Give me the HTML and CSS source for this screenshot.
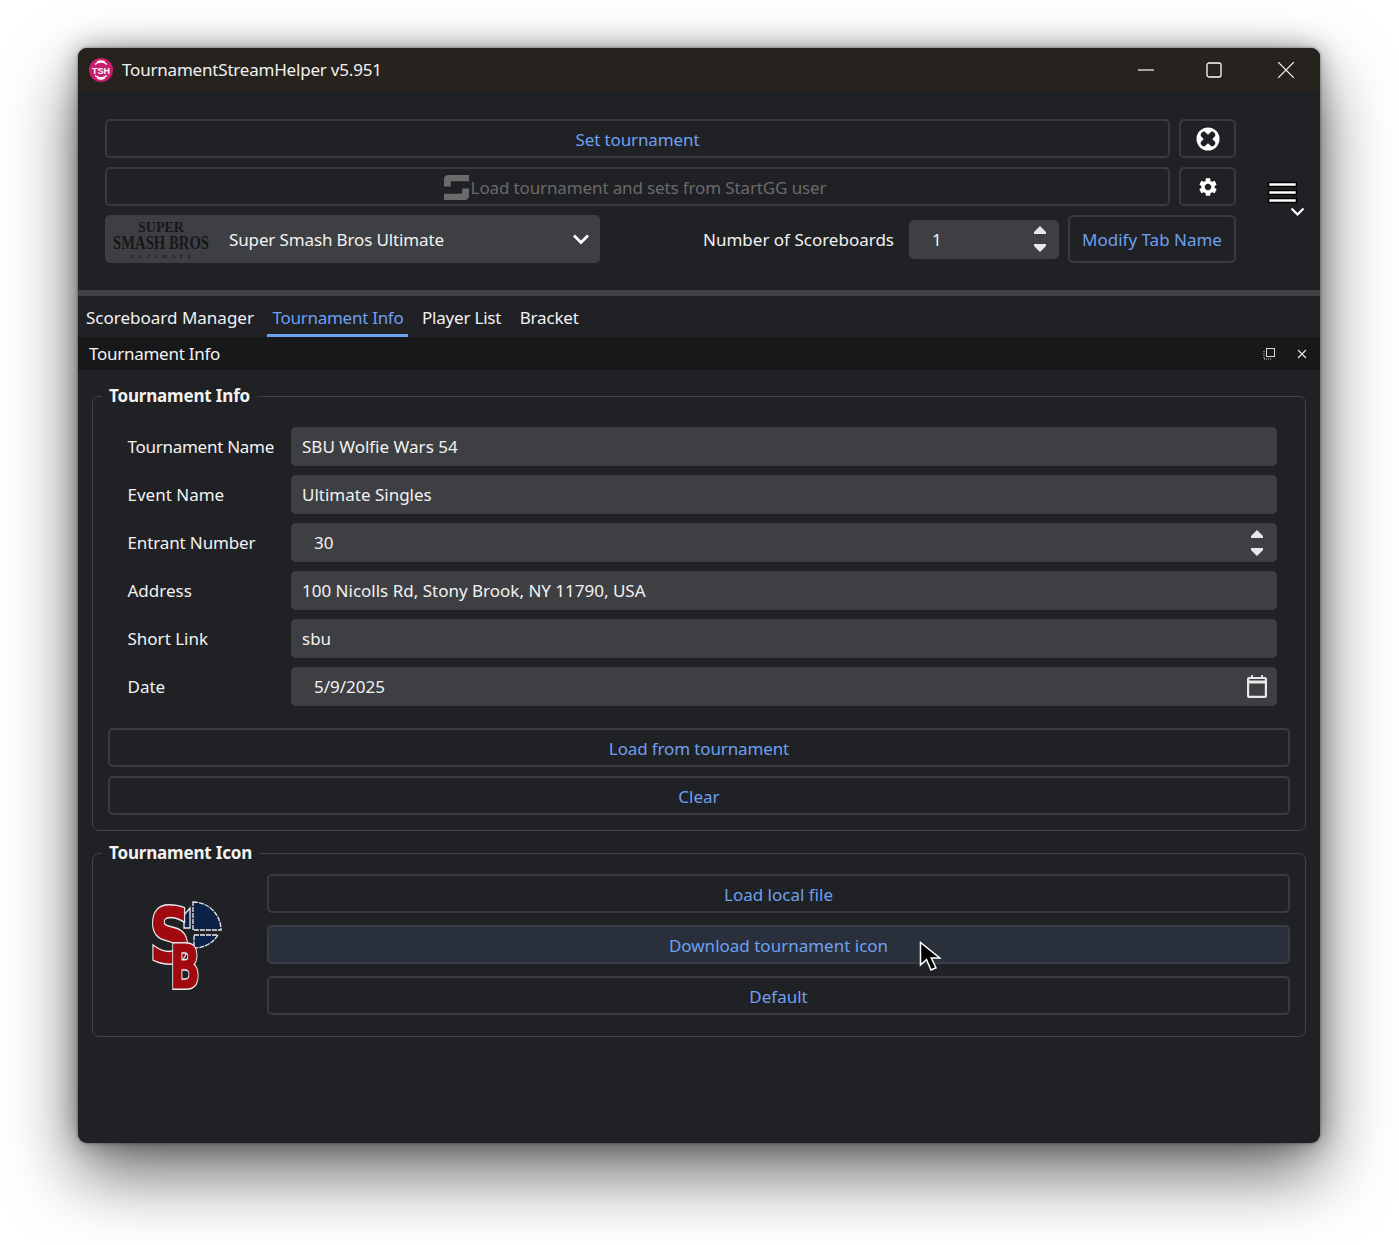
FILE: index.html
```html
<!DOCTYPE html>
<html>
<head>
    <title>TournamentStreamHelper v5.951</title>
    <link rel="stylesheet" href="styles.css">
</head>
<body>
    <div class="window">
        <div class="titlebar">
            <svg class="app-icon" viewBox="0 0 24 24">
                <circle cx="12" cy="12" r="12" fill="#c81e6e"/>
                <path d="M6 6.500a9 9 0 0 1 12 0M8 4a8 8 0 0 1 8 0M6 17.500a9 9 0 0 0 12 0M8 20a8 8 0 0 0 8 0" fill="none" stroke="#fff" stroke-width="1.300"/>
                <text x="12" y="15.500" text-anchor="middle" class="app-icon-text">TSH</text>
            </svg>
            <span class="app-title">TournamentStreamHelper v5.951</span>
            <div class="win-controls">
                <svg class="win-btn" viewBox="0 0 16 16"><path d="M0 8h16" stroke="#fff" stroke-width="1.200"/></svg>
                <svg class="win-btn win-max" viewBox="0 0 16 16"><rect x="1" y="1" width="14" height="14" rx="2" fill="none" stroke="#fff" stroke-width="1.300"/></svg>
                <svg class="win-btn" viewBox="0 0 16 16"><path d="M0 0l16 16M16 0L0 16" stroke="#fff" stroke-width="1.200"/></svg>
            </div>
        </div>

        <div class="top">
            <div class="top-rows">
                <div class="row">
                    <button class="btn grow narrow">Set tournament</button>
                    <button class="btn icon-btn">
                        <svg width="24" height="24" viewBox="0 0 24 24">
                            <circle cx="12" cy="12" r="11.500" fill="#fff"/>
                            <path d="M7.800 7.800l8.400 8.400M16.200 7.800l-8.400 8.400" stroke="#1f2024" stroke-width="6" stroke-linecap="round"/>
                        </svg>
                    </button>
                </div>
                <div class="row">
                    <button class="btn grow btn-disabled narrow">
                        <svg width="25" height="25" viewBox="0 0 24 24" fill="#6b6b6b">
                            <path d="M0 11V4a4 4 0 0 1 4-4H24V6H7.500a1 1 0 0 0-1 1V11Z"/>
                            <path d="M24 13V20a4 4 0 0 1-4 4H0V18H16.500a1 1 0 0 0 1-1V13Z"/>
                        </svg>
                        Load tournament and sets from StartGG user
                    </button>
                    <button class="btn icon-btn">
                        <svg width="22" height="22" viewBox="0 0 24 24" fill="#fff">
                            <path d="M19.14 12.94c.04-.3.06-.61.06-.94 0-.32-.02-.64-.07-.94l2.03-1.58c.18-.14.23-.41.12-.61l-1.92-3.32c-.12-.22-.37-.29-.59-.22l-2.39.96c-.5-.38-1.03-.7-1.62-.94l-.36-2.54c-.04-.24-.24-.41-.48-.41h-3.84c-.24 0-.43.17-.47.41l-.36 2.54c-.59.24-1.13.57-1.62.94l-2.39-.96c-.22-.08-.47 0-.59.22L2.74 8.87c-.12.21-.08.47.12.61l2.03 1.58c-.05.3-.09.63-.09.94s.02.64.07.94l-2.03 1.58c-.18.14-.23.41-.12.61l1.92 3.32c.12.22.37.29.59.22l2.39-.96c.5.38 1.03.7 1.62.94l.36 2.54c.05.24.24.41.48.41h3.84c.24 0 .44-.17.47-.41l.36-2.54c.59-.24 1.13-.56 1.62-.94l2.39.96c.22.08.47 0 .59-.22l1.92-3.32c.12-.22.07-.47-.12-.61l-2.01-1.58zM12 15.600c-1.98 0-3.6-1.62-3.6-3.6s1.62-3.6 3.6-3.6 3.6 1.62 3.6 3.6-1.62 3.6-3.6 3.6z"/>
                        </svg>
                    </button>
                </div>
                <div class="row row-game">
                    <div class="combo">
                        <svg class="game-logo" viewBox="0 -3 100 46">
                            <text x="50" y="13" font-size="14" textLength="46" lengthAdjust="spacingAndGlyphs">SUPER</text>
                            <text transform="translate(50 30) scale(1 1.300)" font-size="15" textLength="96" lengthAdjust="spacingAndGlyphs">SMASH BROS</text>
                            <text x="50" y="38.500" font-size="5" textLength="60">ULTIMATE</text>
                        </svg>
                        <span class="combo-text narrow">Super Smash Bros Ultimate</span>
                        <svg width="18" height="12" viewBox="0 0 18 12"><path d="M2 2.500l7 7 7-7" fill="none" stroke="#fff" stroke-width="2.800"/></svg>
                    </div>
                    <div class="score-count">
                        <span class="score-label">Number of Scoreboards</span>
                        <div class="spin">
                            <span>1</span>
                            <svg width="12" height="26" viewBox="0 0 12 26" fill="#e8e8e8"><path d="M6 0l6 6v2H0V6zM0 18h12v2l-6 6-6-6z"/></svg>
                        </div>
                    </div>
                    <button class="btn btn-tall">Modify Tab Name</button>
                </div>
            </div>
            <div class="menu">
                <svg width="38" height="36" viewBox="0 0 38 36">
                    <path d="M1.500 1.500h28v4h-28zM1.500 9.500h28v4h-28zM1.500 17.500h28v4h-28z" fill="#fff" stroke="#000" stroke-width="1.600"/>
                    <path d="M24.500 27.500l6 6 6-6" fill="none" stroke="#fff" stroke-width="2.200"/>
                </svg>
            </div>
        </div>

        <div class="splitter"></div>

        <div class="tabs">
            <span class="tab">Scoreboard Manager</span>
            <span class="tab tab-active">Tournament Info</span>
            <span class="tab tab-tight">Player List</span>
            <span class="tab tab-tight">Bracket</span>
        </div>

        <div class="dock-title">
            <span class="tight">Tournament Info</span>
            <div class="dock-icons">
                <svg width="12" height="12" viewBox="0 0 12 12" fill="none" stroke="#d8d8d8">
                    <rect x="3.500" y="0.500" width="8" height="8"/>
                    <path d="M1 3v8h8" stroke-dasharray="1 1"/>
                </svg>
                <svg width="10" height="10" viewBox="0 0 10 10" stroke="#e4e4e4" stroke-width="1.200"><path d="M1 1l8 8M9 1l-8 8"/></svg>
            </div>
        </div>

        <fieldset class="group">
            <legend>Tournament Info</legend>
            <div class="form">
                <label class="tight">Tournament Name</label>
                <div class="field">SBU Wolfie Wars 54</div>
                <label>Event Name</label>
                <div class="field">Ultimate Singles</div>
                <label class="narrow">Entrant Number</label>
                <div class="field field-spin">
                    <span>30</span>
                    <svg width="12" height="26" viewBox="0 0 12 26" fill="#e8e8e8"><path d="M6 0l6 6v2H0V6zM0 18h12v2l-6 6-6-6z"/></svg>
                </div>
                <label>Address</label>
                <div class="field">100 Nicolls Rd, Stony Brook, NY 11790, USA</div>
                <label>Short Link</label>
                <div class="field">sbu</div>
                <label>Date</label>
                <div class="field field-date">
                    <span>5/9/2025</span>
                    <svg width="20" height="23" viewBox="0 0 20 23" fill="none" stroke="#e8e8e8" stroke-width="2.200">
                        <rect x="1.100" y="3" width="17.800" height="18.900" rx="1"/>
                        <path d="M1 7h18" stroke-width="3"/>
                        <path d="M5 0v3M15 0v3" stroke-width="1.800"/>
                    </svg>
                </div>
            </div>
            <div class="stack">
                <button class="btn narrow">Load from tournament</button>
                <button class="btn">Clear</button>
            </div>
        </fieldset>

        <fieldset class="group group-icon">
            <legend>Tournament Icon</legend>
            <div class="icon-row">
                <div class="logo-box">
                    <svg width="76" height="112" viewBox="0 -6 76 112">
                        <defs>
                            <text id="sb-s" x="23" y="64" font-size="74" textLength="41" lengthAdjust="spacingAndGlyphs" class="sb-letter">S</text>
                            <text id="sb-b" x="38" y="90" font-size="60" textLength="30" lengthAdjust="spacingAndGlyphs" class="sb-letter">B</text>
                        </defs>
                        <g fill="#0c2148" stroke="#e8ecf0" stroke-width="1.300">
                            <path d="M46 4A28 28 0 0 1 74 32H46Z" stroke-dasharray="5 1"/>
                            <path d="M47 37H71A28 28 0 0 1 47 50Z" stroke-dasharray="5 1"/>
                            <path d="M43 10V30H37V17Z"/>
                        </g>
                        <use href="#sb-s" class="sb-outline"/>
                        <use href="#sb-s" class="sb-body"/>
                        <use href="#sb-b" class="sb-outline"/>
                        <use href="#sb-b" class="sb-body"/>
                    </svg>
                </div>
                <div class="icon-buttons">
                    <button class="btn">Load local file</button>
                    <button class="btn btn-hover">Download tournament icon</button>
                    <button class="btn">Default</button>
                </div>
            </div>
        </fieldset>

        <svg class="cursor" width="24" height="32" viewBox="0 0 24 32">
            <path d="M1.500 1.500V24l6-5.500 4.500 10.500 5-2.200L12.300 17h8.500z" fill="#000" stroke="#fff" stroke-width="1.500"/>
        </svg>
    </div>
</body>
</html>
```

FILE: styles.css
```css
:root {
    --bg: #202125;
    --field: #3e3f42;
    --line: #393a3e;
    --text: #f2f2f2;
    --accent: #6ea0f0;
}

* {
    box-sizing: border-box;
}

body {
    margin: 0;
    padding: 48px 78px;
    background: #fff;
    font-family: "Noto Sans", sans-serif;
    font-size: 17px;
    color: var(--text);
    height: 1245px;
    overflow: hidden;
}

.window {
    position: relative;
    width: 1242px;
    height: 1095px;
    background: var(--bg);
    border-radius: 9px;
    box-shadow: 0 0 3px rgba(0, 0, 0, 0.5), 0 30px 70px rgba(0, 0, 0, 0.6), 0 0 24px rgba(0, 0, 0, 0.35);
}

.titlebar {
    display: flex;
    align-items: center;
    height: 44px;
    padding-left: 11px;
    background: #26221e;
    border-radius: 9px 9px 0 0;
}

.app-icon {
    width: 24px;
    height: 24px;
}

.app-icon-text {
    font: bold 9px "Liberation Sans", sans-serif;
    fill: #fff;
}

.app-title {
    margin: -2px 0 0 9px;
    letter-spacing: -0.2px;
}

.win-controls {
    display: flex;
    align-items: center;
    margin-left: auto;
    padding-right: 26px;
    gap: 54px;
}

.win-btn {
    width: 16px;
    height: 16px;
}

.win-max {
    margin: 0 2px 0 -2px;
}

.top {
    display: flex;
    align-items: center;
    padding: 27px 0 27px 27px;
}

.top-rows {
    display: flex;
    flex-direction: column;
    gap: 9px;
    width: 1131px;
}

.row {
    display: flex;
    gap: 9px;
}

.row-game {
    align-items: center;
}

.btn {
    display: flex;
    align-items: center;
    justify-content: center;
    height: 39px;
    padding: 1px 0 0;
    background: transparent;
    border: 2px solid var(--line);
    border-radius: 5px;
    color: var(--accent);
    font: inherit;
}

.grow {
    flex: 1;
}

.narrow {
    letter-spacing: -0.13px;
}

.icon-btn {
    width: 57px;
    padding: 0;
}

.btn-disabled {
    color: #6a6a6a;
    gap: 2px;
    padding-right: 5px;
}

.btn-tall {
    width: 168px;
    height: 48px;
}

.btn-hover {
    background: #29303c;
    border-color: #393d44;
}

.combo {
    display: flex;
    align-items: center;
    width: 495px;
    height: 48px;
    padding: 0 10px 0 6px;
    background: var(--field);
    border-radius: 5px;
}

.game-logo {
    width: 100px;
    height: 46px;
}

.game-logo text {
    text-anchor: middle;
    fill: #17171a;
    font-family: "Liberation Serif", serif;
    font-weight: bold;
}

.combo-text {
    flex: 1;
    margin-left: 18px;
}

.score-count {
    display: flex;
    align-items: center;
    margin-left: auto;
    gap: 15px;
}

.spin {
    display: flex;
    align-items: center;
    justify-content: space-between;
    width: 150px;
    height: 39px;
    padding: 0 13px 0 23px;
    background: var(--field);
    border-radius: 5px;
}

.menu {
    display: flex;
    margin-left: 31px;
    margin-top: 15px;
}

.splitter {
    height: 6px;
    background: #3f4143;
}

.tabs {
    display: flex;
    gap: 8.500px;
    height: 41px;
    padding-left: 3px;
}

.tab {
    padding: 9px 5px 0;
    line-height: 26px;
}

.tab-tight {
    letter-spacing: -0.2px;
}

.tab-active {
    color: var(--accent);
    border-bottom: 3px solid var(--accent);
    letter-spacing: -0.27px;
}

.tight {
    letter-spacing: -0.27px;
}

.dock-title {
    display: flex;
    align-items: center;
    justify-content: space-between;
    height: 33px;
    padding: 0 13px 0 11px;
    background: #17181a;
}

.dock-icons {
    display: flex;
    align-items: center;
    gap: 22px;
}

.group {
    margin: 14px 14px 0;
    padding: 0 15px 15px;
    border: 1px solid #424347;
    border-radius: 7px;
    min-width: 0;
}

.group legend {
    margin-left: -6px;
    padding: 0 7px;
    font-weight: bold;
    line-height: 24px;
    letter-spacing: -0.17px;
}

.group-icon {
    margin-top: 10px;
    padding-bottom: 21px;
}

.form {
    display: grid;
    grid-template-columns: 163.500px 1fr;
    gap: 9px 0;
    padding: 19px 13px 0 19.500px;
    align-items: center;
}

.field {
    display: flex;
    align-items: center;
    justify-content: space-between;
    height: 39px;
    padding: 0 11px;
    background: var(--field);
    border-radius: 5px;
}

.field-spin {
    padding: 0 14px 0 23px;
}

.field-date {
    padding: 0 10px 0 23px;
}

.stack {
    display: flex;
    flex-direction: column;
    gap: 9px;
    margin-top: 22px;
}

.icon-row {
    display: flex;
    padding-top: 9px;
}

.logo-box {
    flex: none;
    width: 159px;
    padding: 18px 0 0 39px;
}

.icon-buttons {
    display: flex;
    flex-direction: column;
    gap: 12px;
    flex: 1;
}

.sb-letter {
    font-family: "DejaVu Sans", sans-serif;
    font-weight: bold;
    text-anchor: middle;
}

.sb-outline {
    fill: #e8ecf0;
    stroke: #e8ecf0;
    stroke-width: 4px;
}

.sb-body {
    fill: #a00a0f;
    stroke: #a00a0f;
    stroke-width: 1.200px;
}

.cursor {
    position: absolute;
    left: 841px;
    top: 893px;
}
```
